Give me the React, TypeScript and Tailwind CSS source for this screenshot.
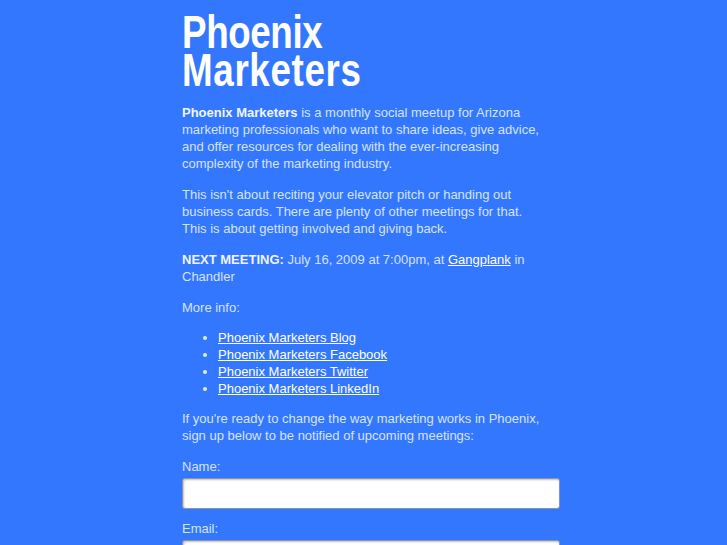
export default function App() {
  const links = [
    'Phoenix Marketers Blog',
    'Phoenix Marketers Facebook',
    'Phoenix Marketers Twitter',
    'Phoenix Marketers LinkedIn',
  ]

  return (
    <div className="min-h-[545px] bg-[#3377ff] text-[#d6e3ff] font-['Liberation_Sans',Arial,sans-serif] text-[13px] leading-[17px] overflow-hidden">
      <div className="ml-[182px] w-[378px] pt-[13px]">
        {/* Logo / heading */}
        <h1 className="text-white font-bold text-[46px] leading-[38px] origin-left scale-x-[0.8]">
          <span className="block tracking-[-0.5px]">Phoenix</span>
          <span className="block tracking-[0.8px]">Marketers</span>
        </h1>

        <div className="w-[364px]">
          <p className="mt-[15px]">
            <strong className="text-[#f0f5ff]">Phoenix Marketers</strong> is a monthly social meetup for Arizona
            marketing professionals who want to share ideas, give advice, and offer resources for dealing with
            the ever-increasing complexity of the marketing industry.
          </p>

          <p className="mt-[14px]">
            This isn't about reciting your elevator pitch or handing out business cards. There are plenty of
            other meetings for that. This is about getting involved and giving back.
          </p>

          <p className="mt-[14px]">
            <strong className="text-[#f0f5ff]">NEXT MEETING:</strong> July 16, 2009 at 7:00pm, at{' '}
            <a href="#" className="text-white underline">Gangplank</a> in Chandler
          </p>

          <p className="mt-[14px]">More info:</p>

          <ul className="mt-[13px] pl-[36px] list-disc marker:text-[#e6eeff]">
            {links.map((l) => (
              <li key={l}>
                <a href="#" className="text-white underline">{l}</a>
              </li>
            ))}
          </ul>

          <p className="mt-[13px]">
            If you're ready to change the way marketing works in Phoenix, sign up below to be notified of
            upcoming meetings:
          </p>
        </div>

        <form className="mt-[14px]">
          <label className="block">Name:</label>
          <input
            type="text"
            className="mt-[3px] block w-full h-[31px] bg-white rounded-[3px] border border-[#8a93a8] shadow-[inset_1px_1px_2px_rgba(0,0,0,0.25)]"
          />
          <label className="block mt-[11px]">Email:</label>
          <input
            type="text"
            className="mt-[3px] block w-full h-[31px] bg-white rounded-[3px] border border-[#8a93a8] shadow-[inset_1px_1px_2px_rgba(0,0,0,0.25)]"
          />
        </form>
      </div>
    </div>
  )
}
